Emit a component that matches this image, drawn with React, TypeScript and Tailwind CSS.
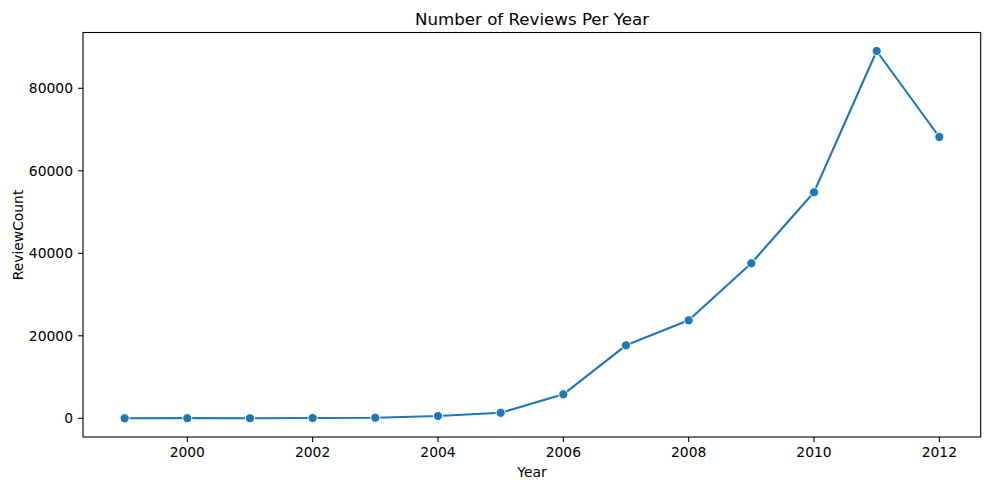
const reviews = [
  { year: 1999, count: 6 },
  { year: 2000, count: 32 },
  { year: 2001, count: 13 },
  { year: 2002, count: 73 },
  { year: 2003, count: 132 },
  { year: 2004, count: 561 },
  { year: 2005, count: 1335 },
  { year: 2006, count: 5818 },
  { year: 2007, count: 17697 },
  { year: 2008, count: 23757 },
  { year: 2009, count: 37576 },
  { year: 2010, count: 54788 },
  { year: 2011, count: 89042 },
  { year: 2012, count: 68194 },
]

const yTicks = [0, 20000, 40000, 60000, 80000]
const xTicks = [2000, 2002, 2004, 2006, 2008, 2010, 2012]

const left = 83
const right = 980.7
const top = 32.5
const bottom = 437

const xPos = (year: number) => 187.3 + (year - 2000) * 62.67
const yPos = (v: number) => 418.3 - v * 0.004125

const font = "'DejaVu Sans', Verdana, sans-serif"

function ReviewChart() {
  const points = reviews.map(d => `${xPos(d.year)},${yPos(d.count)}`).join(' ')

  return (
    <svg width={989} height={490} viewBox="0 0 989 490" className="block">
      <text x={532} y={24.5} textAnchor="middle" fontSize={16.67} fill="#000" fontFamily={font}>
        Number of Reviews Per Year
      </text>

      <polyline points={points} fill="none" stroke="#1f77b4" strokeWidth={2.1} strokeLinejoin="round" strokeLinecap="round" />
      {reviews.map(d => (
        <circle key={d.year} cx={xPos(d.year)} cy={yPos(d.count)} r={4.6} fill="#1f77b4" stroke="#fff" strokeWidth={1} />
      ))}

      <rect x={left} y={top} width={right - left} height={bottom - top} fill="none" stroke="#000" strokeWidth={1.1} />

      {yTicks.map(t => (
        <g key={t}>
          <line x1={left - 4.9} x2={left} y1={yPos(t)} y2={yPos(t)} stroke="#000" strokeWidth={1.1} />
          <text x={73} y={yPos(t) + 5} textAnchor="end" fontSize={13.89} fill="#000" fontFamily={font}>
            {t}
          </text>
        </g>
      ))}

      {xTicks.map(t => (
        <g key={t}>
          <line x1={xPos(t)} x2={xPos(t)} y1={bottom} y2={bottom + 4.9} stroke="#000" strokeWidth={1.1} />
          <text x={xPos(t)} y={456.7} textAnchor="middle" fontSize={13.89} fill="#000" fontFamily={font}>
            {t}
          </text>
        </g>
      ))}

      <text x={532} y={476.7} textAnchor="middle" fontSize={13.89} fill="#000" fontFamily={font}>
        Year
      </text>
      <text transform="translate(23.3,235) rotate(-90)" textAnchor="middle" fontSize={13.89} fill="#000" fontFamily={font}>
        ReviewCount
      </text>
    </svg>
  )
}

export default function App() {
  return (
    <div className="flex h-[490px] w-[989px] bg-white">
      <ReviewChart />
    </div>
  )
}
